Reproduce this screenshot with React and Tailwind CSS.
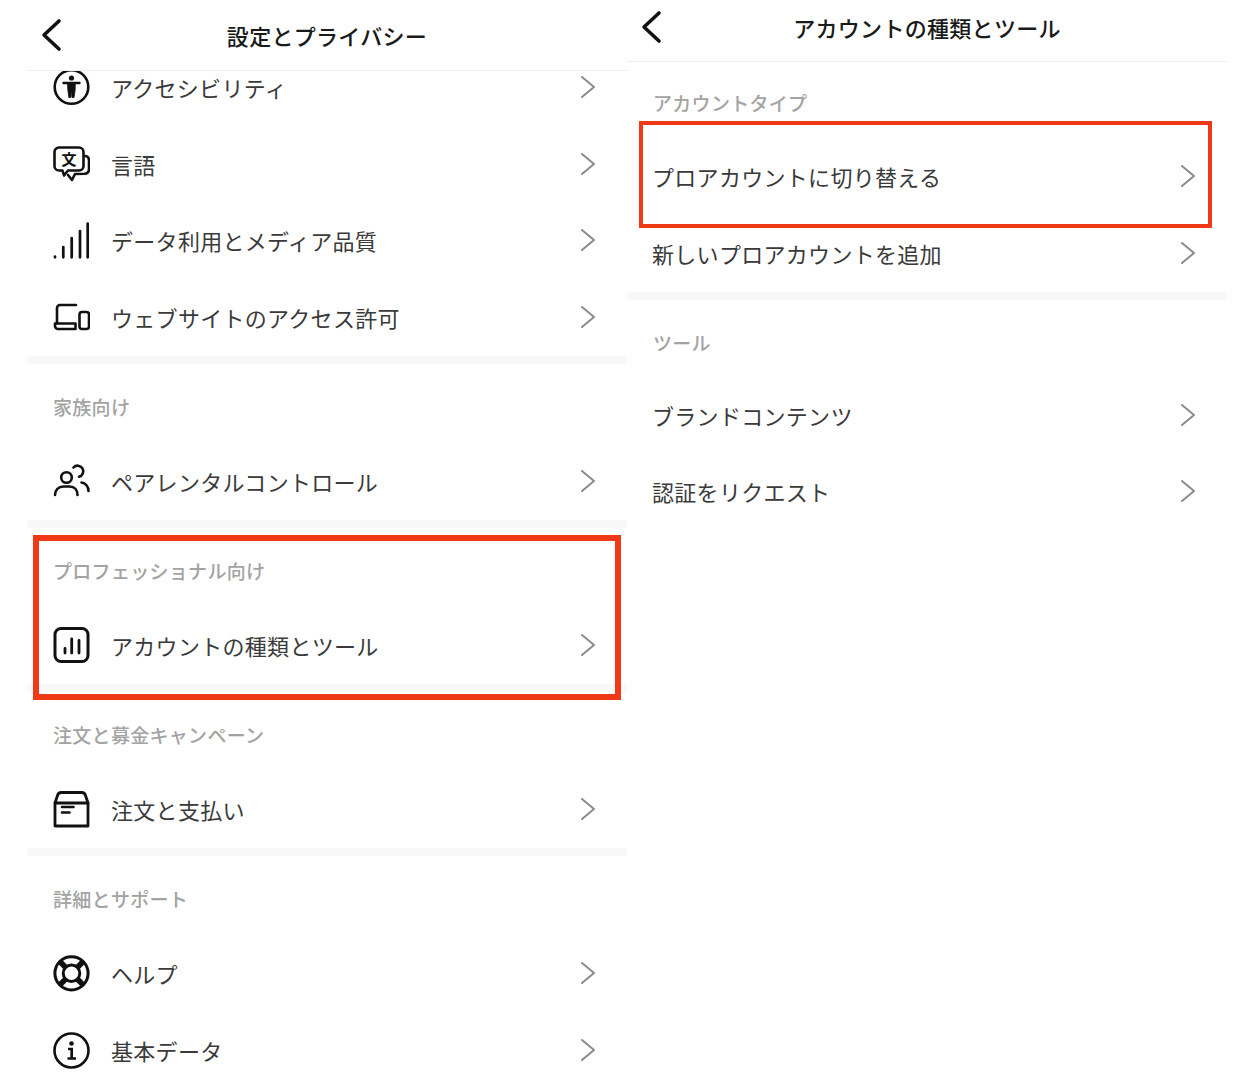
import React from 'react'

const Svg = ({ children }) => (
  <svg viewBox="0 0 38 38" className="w-[38px] h-[38px] shrink-0 text-[#111]" fill="none" stroke="currentColor" strokeWidth="2.6" strokeLinecap="round" strokeLinejoin="round">
    {children}
  </svg>
)

const AccessIcon = () => (
  <Svg>
    <circle cx="19.5" cy="19" r="16.8" />
    <circle cx="19.5" cy="10" r="2.6" fill="currentColor" stroke="none" />
    <path d="M11.5 15h16" strokeWidth="2.4" />
    <path d="M15.8 15h7.4v6.5l-1.2 8h-2l-.5-7h-.1l-.6 7h-2l-1-8z" fill="currentColor" strokeWidth="0.8" />
  </Svg>
)

const LanguageIcon = () => (
  <Svg>
    <path d="M7 2.5h20a4.5 4.5 0 0 1 4.5 4.5v14a4.5 4.5 0 0 1-4.5 4.5H16l-4 5-1.5-5H7A4.5 4.5 0 0 1 2.5 21V7A4.5 4.5 0 0 1 7 2.5z" />
    <path d="M33.5 11c2 .3 3.5 1.6 3.5 4v9c0 3-1.5 4.500-4.500 4.800L23 29l-3 6-4-5" />
    <text x="17" y="19.500" textAnchor="middle" fontSize="15" fontWeight="700" fill="currentColor" stroke="none" fontFamily="'Noto Sans CJK JP', sans-serif">文</text>
  </Svg>
)

const SignalIcon = () => (
  <Svg>
    <path d="M3 35.500v.8M11.300 26v10.300M19.700 17v19.300M28 10v26.300M35.700 2.500v33.800" strokeWidth="2.700" />
  </Svg>
)

const DevicesIcon = () => (
  <Svg>
    <path d="M5 25V10a3 3 0 0 1 3-3h16" />
    <path d="M3 25.500h20.500v5.500H6a3 3 0 0 1-3-3z" />
    <rect x="27.500" y="14" width="9.500" height="17" rx="2.500" />
  </Svg>
)

const ParentsIcon = () => (
  <Svg>
    <circle cx="14.500" cy="15.500" r="5.300" />
    <path d="M3 33c0-5 3.500-8.500 8.500-8.500h6c5 0 8 3.500 8 8.500" />
    <path d="M21.500 5.500a5.600 5.600 0 1 1 5.500 9.200" />
    <path d="M29.500 20.500c4 .5 7 4 7 8.500" />
  </Svg>
)

const ChartIcon = () => (
  <Svg>
    <rect x="3" y="2.500" width="33" height="33" rx="6" strokeWidth="3" />
    <path d="M13 22.500v4.500M19.700 13v14M27 14.500V27" strokeWidth="2.800" />
  </Svg>
)

const OrdersIcon = () => (
  <Svg>
    <path d="M3 13h33v23H3z" strokeWidth="2.800" />
    <path d="M3 13l2.500-7.500a4 4 0 0 1 3.800-3h20.400a4 4 0 0 1 3.800 3L36 13" strokeWidth="2.800" />
    <path d="M10 17h11.500M10 22.500h7.500" strokeWidth="2.600" />
  </Svg>
)

const HelpIcon = () => (
  <Svg>
    <circle cx="19.500" cy="19.300" r="16.600" strokeWidth="3" />
    <circle cx="19.500" cy="19.300" r="8.300" strokeWidth="3" />
    <path d="M13.500 13.300L8 7.800M25.500 13.300L31 7.800M13.500 25.300L8 30.800M25.500 25.300L31 30.800" strokeWidth="5.500" strokeLinecap="butt" />
  </Svg>
)

const InfoIcon = () => (
  <Svg>
    <circle cx="19.500" cy="19.500" r="17" />
    <circle cx="19.500" cy="12.500" r="2.300" fill="currentColor" stroke="none" />
    <path d="M16 18h3.700v9M15.500 27.500h8.500" strokeWidth="2.700" strokeLinecap="butt" strokeLinejoin="miter" />
  </Svg>
)

const Chevron = () => (
  <svg viewBox="0 0 16 24" className="w-4 h-6 shrink-0" fill="none" stroke="#8a8a8a" strokeWidth="2" strokeLinecap="round" strokeLinejoin="round">
    <path d="M2 2l12 10L2 22" />
  </svg>
)

const Back = () => (
  <svg viewBox="0 0 22 34" className="w-[22px] h-[34px]" fill="none" stroke="#111" strokeWidth="3.600" strokeLinecap="round" strokeLinejoin="round">
    <path d="M18 3L3 17l15 14" />
  </svg>
)

const Header = ({ title, className }) => (
  <div className={`grid grid-cols-[1fr_auto_1fr] items-center border-b border-[#eeeeee] bg-white ${className}`}>
    <div className="pl-[14px]"><Back /></div>
    <h1 className="text-[22px] leading-8 tracking-[0.3px] font-medium text-[#1a1a1a]">{title}</h1>
    <div />
  </div>
)

const Row = ({ icon, label }) => (
  <div className="flex items-center h-[76.6px] pl-[25px] pr-[31px]">
    {icon && <div className="mr-[21px]">{icon}</div>}
    <span className="flex-1 text-[22px] leading-8 tracking-[0.3px] text-[#3a3a3a]">{label}</span>
    <Chevron />
  </div>
)

const Label = ({ text, className }) => (
  <div className={`pl-[26px] text-[19px] leading-6 tracking-[0.3px] font-medium text-[#a3a3a3] ${className}`}>{text}</div>
)

const Sep = () => <div className="mt-px h-2 bg-[#f8f8f8]" />

const settings = [
  { title: '家族向け', rows: [{ icon: <ParentsIcon />, label: 'ペアレンタルコントロール' }] },
  { title: 'プロフェッショナル向け', framed: true, rows: [{ icon: <ChartIcon />, label: 'アカウントの種類とツール' }] },
  { title: '注文と募金キャンペーン', rows: [{ icon: <OrdersIcon />, label: '注文と支払い' }] },
  { title: '詳細とサポート', rows: [{ icon: <HelpIcon />, label: 'ヘルプ' }, { icon: <InfoIcon />, label: '基本データ' }] },
]

export default function App() {
  return (
    <div className="flex h-[1080px] overflow-hidden bg-white pl-[27px] font-['Noto_Sans_CJK_JP',sans-serif]">
      {/* settings list */}
      <div className="flex flex-col w-[600px] h-full">
        <Header title="設定とプライバシー" className="h-[71px] shrink-0" />
        <div className="flex-1 overflow-hidden">
          <div className="-mt-[22px]">
            <Row icon={<AccessIcon />} label="アクセシビリティ" />
            <Row icon={<LanguageIcon />} label="言語" />
            <Row icon={<SignalIcon />} label="データ利用とメディア品質" />
            <Row icon={<DevicesIcon />} label="ウェブサイトのアクセス許可" />
            {settings.map((section) => (
              <div key={section.title}>
                <Sep />
                <div className="relative">
                  <Label text={section.title} className="h-[78.400px] pt-[31px]" />
                  {section.rows.map((row) => (
                    <Row key={row.label} icon={row.icon} label={row.label} />
                  ))}
                  {section.framed && (
                    <div className="absolute top-[7px] left-[6px] right-[6px] h-[165px] border-[6px] border-[#f03a17]" />
                  )}
                </div>
              </div>
            ))}
          </div>
        </div>
      </div>

      {/* account type and tools */}
      <div className="w-[600px] h-full">
        <Header title="アカウントの種類とツール" className="h-[62px] pb-[8px]" />
        <Label text="アカウントタイプ" className="h-[76px] pt-[29px] pl-[25px]" />
        <div className="relative">
          <Row label="プロアカウントに切り替える" />
          <div className="absolute -top-[17px] left-[12px] right-[15px] h-[107px] border-4 border-[#f03a17]" />
        </div>
        <Row label="新しいプロアカウントを追加" />
        <Sep />
        <Label text="ツール" className="h-[76.400px] pt-[31px] pl-[25px]" />
        <Row label="ブランドコンテンツ" />
        <Row label="認証をリクエスト" />
      </div>
    </div>
  )
}
